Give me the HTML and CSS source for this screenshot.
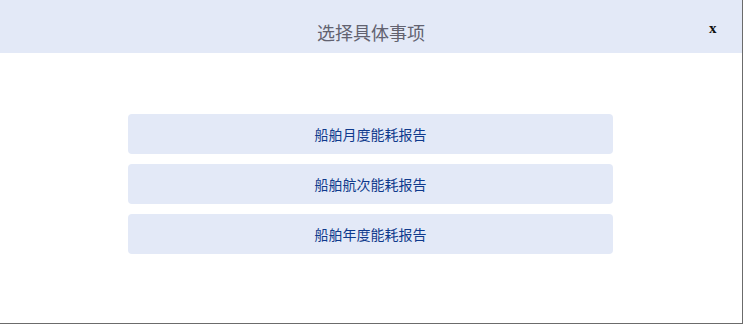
FILE: index.html
```html
<!DOCTYPE html>
<html lang="zh">
<head>
<meta charset="utf-8">
<title>选择具体事项</title>
<link rel="stylesheet" href="styles.css">
</head>
<body>
<div class="dialog">
  <div class="dialog-header">
    <span class="dialog-title">选择具体事项</span>
    <span class="dialog-close">x</span>
  </div>
  <div class="dialog-body">
    <div class="option">船舶月度能耗报告</div>
    <div class="option">船舶航次能耗报告</div>
    <div class="option">船舶年度能耗报告</div>
  </div>
</div>
</body>
</html>
```
FILE: styles.css
```css
html, body {
  margin: 0;
  padding: 0;
  background: #ffffff;
}
.dialog {
  width: 742px;
  height: 323px;
  border-right: 1px solid #6b6b6b;
  border-bottom: 1px solid #6b6b6b;
  background: #ffffff;
  font-family: "Noto Sans CJK SC", "Liberation Sans", sans-serif;
}
.dialog-header {
  position: relative;
  height: 53px;
  background: #e3e9f7;
  display: flex;
  align-items: center;
  justify-content: center;
}
.dialog-title {
  font-size: 18px;
  color: #626270;
  line-height: 1;
  padding-top: 10px;
}
.dialog-close {
  position: absolute;
  left: 709px;
  top: 20px;
  font-family: "Liberation Serif", serif;
  font-weight: bold;
  font-size: 15px;
  color: #111111;
}
.dialog-body {
  padding-top: 61px;
  padding-left: 128px;
  display: flex;
  flex-direction: column;
  gap: 10px;
}
.option {
  width: 485px;
  height: 40px;
  border-radius: 4px;
  background: #e3e9f7;
  color: #0f3a8c;
  font-size: 14px;
  display: flex;
  align-items: center;
  justify-content: center;
}
```
